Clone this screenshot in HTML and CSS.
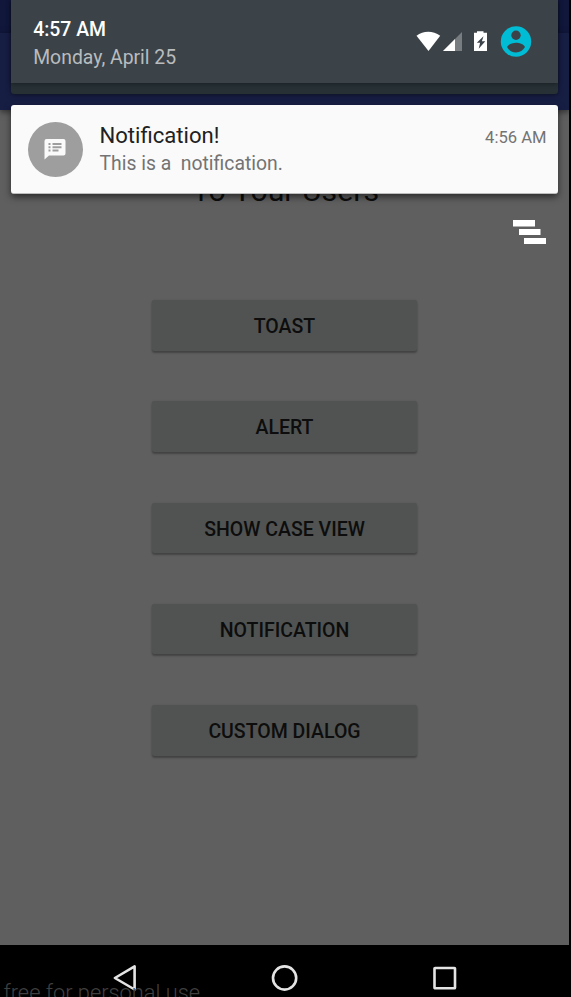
FILE: index.html
```html
<!DOCTYPE html>
<html lang="en">
<head>
<meta charset="utf-8">
<title>Notifications</title>
<link rel="stylesheet" href="styles.css">
</head>
<body>
<div class="device">
  <main class="app">
    <div class="status-bar"></div>
    <div class="app-bar"></div>
    <h1 class="heading">To Your Users</h1>
    <div class="actions">
      <button class="action">TOAST</button>
      <button class="action">ALERT</button>
      <button class="action">SHOW CASE VIEW</button>
      <button class="action">NOTIFICATION</button>
      <button class="action">CUSTOM DIALOG</button>
    </div>
  </main>

  <section class="shade">
    <div class="panel">
      <header class="panel-header">
        <div class="clock">
          <div class="time">4:57 AM</div>
          <div class="date">Monday, April 25</div>
        </div>
        <svg class="status-icons" width="116" height="32" viewBox="0 0 116 32">
          <path fill="#fff" d="M0.500 9.700C4 7.100 8 5.800 12.200 5.800S20.500 7.100 24.200 9.700L12.500 25z"/>
          <path fill="#777d80" d="M27 25L46 6V25z"/>
          <path fill="#fff" d="M27 25L39 13V25z"/>
          <path fill="#fff" fill-rule="evenodd" d="M61 5.300h6.500v1.500H71V25H58V6.800h3zM67.500 10.200l-6.700 6.500h3.300l-1.400 6 6.600-7.500h-3.400z"/>
          <circle cx="100" cy="15.500" r="15.200" fill="#00bcd4"/>
          <circle cx="100" cy="9.300" r="4.700" fill="#3b4349"/>
          <path fill="#3b4349" d="M91 21C92.500 18 97 16.800 100 16.800S107.500 18 109 21C107 24.300 104 26.500 100 26.500S93 24.300 91 21z"/>
        </svg>
      </header>
    </div>

    <article class="notification">
      <div class="avatar">
        <svg width="22" height="22" viewBox="0 0 22 22">
          <path fill="#fafafa" d="M2.500 1h17a2 2 0 0 1 2 2v12.500a2 2 0 0 1-2 2H5L.500 21.500V3a2 2 0 0 1 2-2z"/>
          <path fill="#9e9e9e" d="M4.500 5h2v2h-2zM4.500 8.200h2v2h-2zM4.500 11.400h2v2h-2zM8.500 5h9v2h-9zM8.500 8.200h9v2h-9zM8.500 11.400h6v2h-6z"/>
        </svg>
      </div>
      <div class="message">
        <div class="title">Notification!</div>
        <div class="body">This is a  notification.</div>
      </div>
      <time class="stamp">4:56 AM</time>
    </article>

    <svg class="clear-all" width="34" height="25" viewBox="0 0 34 25">
      <path fill="#fff" d="M0 0h22v6.500H0zM6 9h21.500v6H6zM11 18h22v6H11z"/>
    </svg>
  </section>

  <nav class="nav-bar">
    <svg class="nav-icon" width="28" height="30" viewBox="0 0 28 30">
      <path d="M23.600 3.300V26.500L3.900 15z"/>
    </svg>
    <svg class="nav-icon" width="28" height="30" viewBox="0 0 28 30">
      <circle cx="13.600" cy="15" r="11.600"/>
    </svg>
    <svg class="nav-icon" width="28" height="30" viewBox="0 0 28 30">
      <rect x="3.500" y="5" width="20.500" height="20.300" rx=".6"/>
    </svg>
    <div class="watermark">free for personal use</div>
  </nav>
</div>
</body>
</html>
```
FILE: styles.css
```css
* {
  box-sizing: border-box;
}

body {
  margin: 0;
  background: #000;
  font-family: Roboto, "Liberation Sans", sans-serif;
  overflow: hidden;
}

.device {
  position: relative;
  display: flex;
  flex-direction: column;
  width: 571px;
  height: 997px;
  overflow: hidden;
}

.app {
  width: 569px;
  height: 945px;
  display: flex;
  flex-direction: column;
  background: #5f5f5f;
}

.status-bar {
  height: 33px;
  background: #11173b;
}

.app-bar {
  height: 77px;
  background: #171e44;
  box-shadow: 0 2px 6px rgba(0, 0, 0, .5);
}

.heading {
  margin: 61px 0 0;
  height: 40px;
  line-height: 40px;
  font-size: 30.200px;
  font-weight: 400;
  text-align: center;
  color: #0d0d0d;
  padding-left: 2px;
}

.actions {
  display: flex;
  flex-direction: column;
  align-items: center;
  gap: 51.200px;
  margin-top: 89.300px;
}

.action {
  width: 265px;
  height: 50.500px;
  margin-bottom: -.5px;
  padding: 2.500px 0 0;
  border: 0;
  border-radius: 2.500px;
  background: #505352;
  box-shadow: 0 2px 2px rgba(0, 0, 0, .28), 0 0 2px rgba(0, 0, 0, .12);
  color: #0d0d0d;
  font: 500 19.500px/47px Roboto, "Liberation Sans", sans-serif;
}

.shade {
  position: absolute;
  top: 0;
  left: 11px;
  width: 547px;
  display: flex;
  flex-direction: column;
}

.panel {
  height: 94px;
  border-radius: 0 0 3px 3px;
  background: #263035;
  box-shadow: 0 1px 5px rgba(0, 0, 0, .5);
}

.panel-header {
  display: flex;
  justify-content: space-between;
  height: 83px;
  padding: 16px 26px 0 22.200px;
  background: #3b4349;
  box-shadow: 0 1px 4px rgba(0, 0, 0, .35);
}

.time {
  height: 27px;
  line-height: 27px;
  font-size: 19.400px;
  font-weight: 500;
  color: #fff;
}

.date {
  height: 30px;
  line-height: 30px;
  font-size: 19.400px;
  color: #b9bcbe;
}

.status-icons {
  margin-top: 10px;
}

.notification {
  display: flex;
  height: 89px;
  margin-top: 11px;
  padding: 16px 11.500px 0 17px;
  border-radius: 3px;
  background: #fafafa;
  border-bottom: 1px solid #bdbdbd;
  box-shadow: 0 3px 7px rgba(0, 0, 0, .55);
}

.avatar {
  display: flex;
  align-items: center;
  justify-content: center;
  width: 55px;
  height: 55px;
  margin-top: .7px;
  padding-right: 1px;
  border-radius: 50%;
  background: #9e9e9e;
}

.message {
  flex: 1;
  margin-left: 16.500px;
}

.title {
  height: 28px;
  line-height: 28px;
  font-size: 22.100px;
  color: #212121;
}

.body {
  height: 30px;
  line-height: 30px;
  font-size: 19.350px;
  color: #737373;
  white-space: pre;
}

.stamp {
  height: 34px;
  line-height: 34px;
  font-size: 16.600px;
  color: #737373;
}

.clear-all {
  align-self: flex-end;
  margin: 26px 11.500px 0 0;
}

.nav-bar {
  position: relative;
  display: flex;
  gap: 132px;
  height: 52px;
  padding: 18px 0 0 111px;
  background: #000;
}

.nav-icon {
  fill: none;
  stroke: #e4e4e4;
  stroke-width: 2.600;
  stroke-linejoin: round;
}

.watermark {
  position: absolute;
  left: 3.500px;
  top: 34px;
  line-height: 28px;
  font-size: 21.800px;
  font-weight: 300;
  color: #404040;
  white-space: nowrap;
}
```
